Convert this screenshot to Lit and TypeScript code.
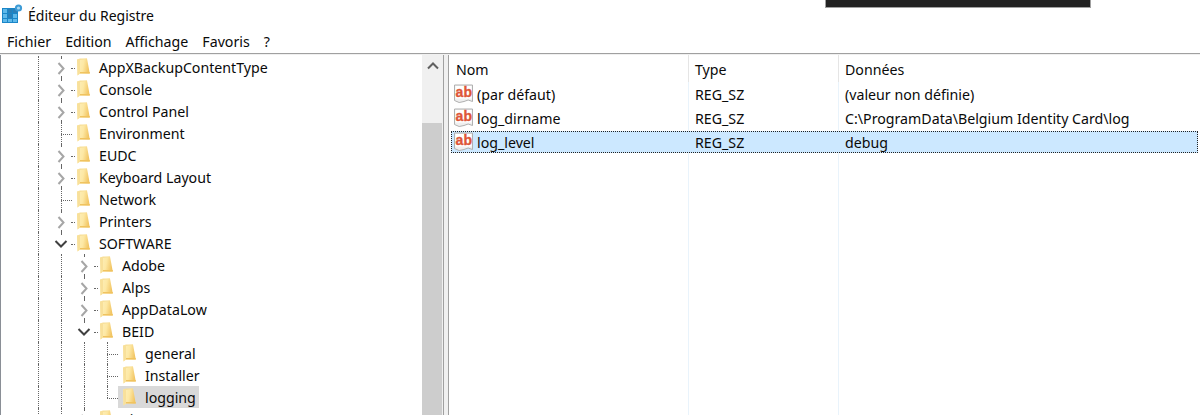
import { LitElement, html, css } from "lit";
import { customElement } from "lit/decorators.js";

const folder = html`<svg class="folder" width="13" height="18" viewBox="0 0 13 18">
  <defs><linearGradient id="fg" x1="0" y1="0" x2="1" y2="0.25"><stop offset="0" stop-color="#fdf0bd"/><stop offset="0.55" stop-color="#fde8a4"/><stop offset="1" stop-color="#f2c665"/></linearGradient></defs>
  <path d="M0 1.5 L10 0.5 L12.8 15.5 L3 15.5 L0.5 17.5 Z" fill="url(#fg)"/>
  <path d="M0 1.5 L3 0.5 L10 0.5 L10 1 L3 2 L3 15.5 L0.5 17.5 Z" fill="#f8e09a"/>
  <path d="M3 15.5 H12.8 V14 H3 Z" fill="#f0c35f"/>
</svg>`;

const ab = html`<svg class="ab" width="20" height="20" viewBox="0 0 20 20">
  <path d="M0.5 1 H18.5 V17.5 Q14 14.5 10 17.5 Q5 20 0.5 16.5 Z" fill="#efefef" stroke="#b0b0b0"/>
  <rect x="1.5" y="2" width="16" height="12.5" fill="#fff"/>
  <text x="1.6" y="13" class="abt">ab</text>
</svg>`;

const tree: [number, string, string, string?][] = [
  [0, "c", "AppXBackupContentType"],
  [0, "c", "Console"],
  [0, "c", "Control Panel"],
  [0, "n", "Environment"],
  [0, "c", "EUDC"],
  [0, "c", "Keyboard Layout"],
  [0, "n", "Network"],
  [0, "c", "Printers"],
  [0, "o", "SOFTWARE"],
  [1, "c", "Adobe"],
  [1, "c", "Alps"],
  [1, "c", "AppDataLow"],
  [1, "o", "BEID"],
  [2, "n", "general"],
  [2, "n", "Installer"],
  [2, "l", "logging", "sel"],
  [1, "c", "Si"],
];

function connector(k: string) {
  if (k === "c")
    return html`<svg class="chev" viewBox="0 0 16 22"><path d="M5.5 7 L10.5 12.5 L5.5 18" fill="none" stroke="#a6a6a6" stroke-width="2"/></svg>
      <span class="v stub-t"></span><span class="v stub-b"></span><span class="h short"></span>`;
  if (k === "o")
    return html`<svg class="chev" viewBox="0 0 16 22"><path d="M2.5 9 L8 14.5 L13.5 9" fill="none" stroke="#404040" stroke-width="2"/></svg>
      <span class="v stub-t"></span><span class="h short"></span>`;
  return html`<span class="v ${k === "l" ? "half" : "full"}"></span><span class="h long"></span>`;
}

@customElement("app-root")
export class AppRoot extends LitElement {
  static styles = css`
    :host { display: block; width: 1200px; height: 415px; overflow: hidden; background: #fff; position: relative;
      font-family: "Noto Sans", "Open Sans", sans-serif; font-size: 14.2px; color: #0a0a0a; }
    .titlebar { height: 30px; display: flex; align-items: center; gap: 4px; padding-left: 2px; font-size: 14px; }
    .appicon { flex: none; }
    .black { position: absolute; left: 825px; top: 0; width: 266px; height: 8px; background: #222; border: solid #a0a0a0; border-width: 0 1px 1px 1px; box-sizing: border-box; }
    .menu { height: 22px; margin-bottom: 1px; display: flex; align-items: center; gap: 14px; padding-left: 7px; }
    .panes { height: 362px; display: flex; border-top: 1px solid #a0a0a0; background: #f0f0f0; padding-top: 1px; box-sizing: border-box; }
    .left { width: 444px; flex: none; background: #fff; border-left: 1px solid #8a8f96; border-right: 1px solid #a0a0a0; display: flex; box-sizing: border-box; }
    .tree { flex: 1; padding-top: 1px; overflow: hidden; }
    .row { height: 22px; display: flex; align-items: stretch; position: relative; white-space: nowrap; }
    .conn { width: 19px; flex: none; position: relative; }
    .chev { position: absolute; left: 0; top: 0; width: 16px; height: 22px; display: block; }
    .v { position: absolute; left: 8px; border-left: 1px dotted #666; }
    .h { position: absolute; top: 12px; border-top: 1px dotted #666; }
    .stub-t { top: 0; height: 2px; }
    .stub-b { top: 20px; height: 2px; }
    .full { top: 0; height: 22px; }
    .half { top: 0; height: 12px; }
    .short { left: 18px; width: 4px; }
    .long { left: 8px; width: 11px; }
    .guide { position: absolute; top: 0; height: 22px; border-left: 1px dotted #666; }
    .item { display: flex; align-items: flex-start; gap: 9px; padding: 0 3px 0 5px; height: 22px; }
    .folder { flex: none; display: block; margin-top: 2px; }
    .label { line-height: 24px; }
    .sel { background: #d9d9d9; }
    .scroll { width: 21px; flex: none; background: #f0f0f0; position: relative; }
    .up { display: block; margin: 7px auto 0; }
    .thumb { position: absolute; left: 0; right: 1px; top: 68px; bottom: 0; background: #cdcdcd; }
    .right { flex: 1; margin-left: 4px; background: #fff; border-left: 1px solid #a0a0a0; position: relative; }
    .vrule { position: absolute; top: 0; bottom: 0; width: 1px; background: #e9f3fb; }
    .hrule { position: absolute; top: 0; height: 27px; width: 1px; background: #e5e5e5; }
    .hdr, .lrow { position: relative; display: grid; grid-template-columns: 239px 150px 1fr; height: 24px; align-items: center; }
    .hdr { height: 27px; padding-top: 1px; box-sizing: border-box; }
    .lrow > div, .hdr span { padding-left: 7px; white-space: nowrap; }
    .lrow > .name { display: flex; align-items: center; padding-left: 5px; gap: 3px; }
    .lrow.cur { background: #cce8ff; outline: 1px dotted #222; outline-offset: -1px; margin: 1px 0 0 2px; height: 22px; grid-template-columns: 237px 150px 1fr; width: 747px; }
    .lrow.cur > .name { padding-left: 3px; }
    .abt { font: bold 14px "Liberation Sans", sans-serif; fill: #de5538; stroke: #de5538; stroke-width: 0.35px; }
  `;

  render() {
    return html`
      <div class="black"></div>
      <div class="titlebar">
        <svg class="appicon" width="22" height="22" viewBox="0 0 22 22">
          <rect x="0" y="4" width="16" height="15" fill="#1a86c8"/>
          <g fill="#5fb9ea">
            <rect x="1" y="5" width="4" height="4"/><rect x="6" y="5" width="4" height="4" fill="#2a7fb8"/><rect x="11" y="5" width="4" height="4" fill="#2a7fb8"/>
            <rect x="1" y="10" width="4" height="4"/><rect x="6" y="10" width="4" height="4" fill="#2a7fb8"/><rect x="11" y="10" width="4" height="4"/>
            <rect x="1" y="15" width="4" height="3"/><rect x="6" y="15" width="4" height="3"/><rect x="11" y="15" width="4" height="3"/>
          </g>
          <circle cx="16.5" cy="4" r="3.6" fill="#3d9bd6"/>
          <circle cx="16.5" cy="4" r="1.6" fill="#a9d9f4"/>
        </svg>
        <span>Éditeur du Registre</span>
      </div>
      <div class="menu"><span>Fichier</span><span>Edition</span><span>Affichage</span><span>Favoris</span><span>?</span></div>
      <div class="panes">
        <div class="left">
          <div class="tree">
            ${tree.map(([d, k, t, s]) => html`
              <div class="row" style="padding-left:${52 + d * 23}px">
                <span class="guide" style="left:37px"></span>
                ${d >= 1 ? html`<span class="guide" style="left:60px"></span>` : ""}
                ${d >= 2 ? html`<span class="guide" style="left:83px"></span>` : ""}
                <span class="conn">${connector(k)}</span>
                <span class="item ${s ?? ""}">${folder}<span class="label">${t}</span></span>
              </div>`)}
          </div>
          <div class="scroll">
            <svg class="up" width="12" height="8" viewBox="0 0 12 8"><path d="M1 6.5 L6 1.5 L11 6.5" fill="none" stroke="#606060" stroke-width="2"/></svg>
            <div class="thumb"></div>
          </div>
        </div>
        <div class="right">
          <div class="vrule" style="left:239px"></div>
          <div class="vrule" style="left:389px"></div>
          <div class="hrule" style="left:239px"></div>
          <div class="hrule" style="left:389px"></div>
          <div class="hdr"><span>Nom</span><span>Type</span><span>Données</span></div>
          <div class="lrow"><div class="name">${ab}<span>(par défaut)</span></div><div>REG_SZ</div><div>(valeur non définie)</div></div>
          <div class="lrow"><div class="name">${ab}<span>log_dirname</span></div><div>REG_SZ</div><div>C:\\ProgramData\\Belgium Identity Card\\log</div></div>
          <div class="lrow cur"><div class="name">${ab}<span>log_level</span></div><div>REG_SZ</div><div>debug</div></div>
        </div>
      </div>
    `;
  }
}
